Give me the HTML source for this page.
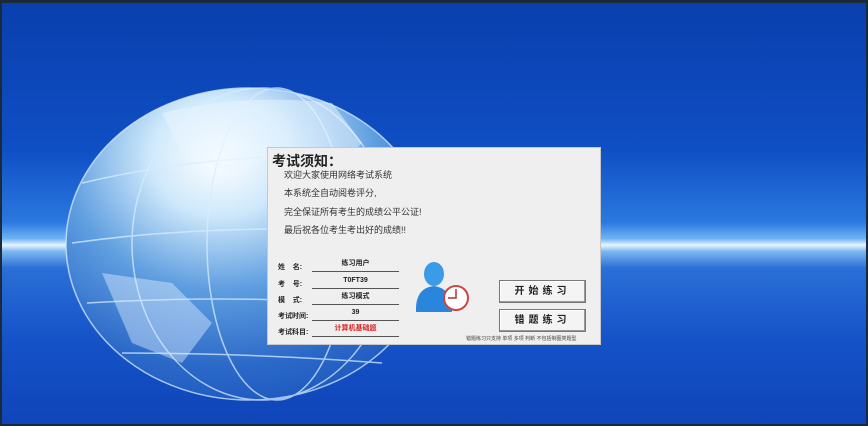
<!DOCTYPE html>
<html><head><meta charset="utf-8"><style>
*{margin:0;padding:0;box-sizing:border-box}
body{width:868px;height:426px;overflow:hidden;background:#1a2a3a;font-family:"Liberation Sans","Noto Sans CJK SC",sans-serif;position:relative}
#bg{position:absolute;left:2px;top:3px;width:864px;height:421px;overflow:hidden;
background:linear-gradient(180deg,#0a3fae 0%,#0f4fc4 35%,#2a78e0 52%,#6fb4f4 56%,#e8f6ff 57.5%,#7cb8f0 59%,#2a6fd6 63%,#1552c8 80%,#0f45b8 100%)}
.dlg{position:absolute;left:267px;top:147px;width:334px;height:198px;background:#efefef;border:1px solid #c8c8c8}
.t{position:absolute;font-size:12px;color:#333}
.lbl{position:absolute;left:10px;font-size:7px;font-weight:bold;color:#222}
.val{position:absolute;left:44px;width:87px;text-align:center;font-size:7px;font-weight:bold;color:#222;border-bottom:1px solid #555;height:14px;line-height:12px}
.btn{position:absolute;left:231px;width:87px;height:23px;border:1px solid #777;background:#f4f4f4;box-shadow:inset -1px -1px #999,inset 1px 1px #fff;font-size:10px;font-weight:bold;text-align:center;line-height:21px;letter-spacing:4px;color:#222}
</style></head><body>
<div id="bg">
<svg width="864" height="421" style="position:absolute;left:0;top:0">
<defs>
<radialGradient id="g" cx="0.42" cy="0.22" r="0.85">
<stop offset="0" stop-color="#ffffff"/><stop offset="0.22" stop-color="#cfe9fb"/><stop offset="0.5" stop-color="#5f9ee0"/><stop offset="0.8" stop-color="#2a68c8"/><stop offset="1" stop-color="#1a55bc"/>
</radialGradient>
</defs>
<ellipse cx="247" cy="241" rx="183" ry="156" fill="url(#g)"/>
<g fill="none" stroke="#d8ecff" stroke-width="1.5" opacity="0.75">
<ellipse cx="247" cy="241" rx="183" ry="156"/>
<ellipse cx="260" cy="241" rx="130" ry="156"/>
<ellipse cx="275" cy="241" rx="70" ry="156"/>
<path d="M80 180 Q250 140 420 160 M70 240 Q250 215 430 235 M85 300 Q250 290 420 305 M120 350 Q250 350 380 360"/>
</g>
<path d="M160 110 Q240 90 330 100 L360 140 L330 170 L280 150 L230 170 L180 150 Z" fill="#eaf6ff" opacity="0.5"/>
<path d="M100 270 L170 280 L210 320 L180 360 L130 340 Z" fill="#dbeeff" opacity="0.45"/>
</svg>
</div>
<div class="dlg">
<div class="t" style="left:4px;top:3px;font-size:14px;font-weight:bold;color:#222">考试须知：</div>
<div class="t" style="left:16px;top:20px;font-size:9px">欢迎大家使用网络考试系统</div>
<div class="t" style="left:16px;top:38px;font-size:9px">本系统全自动阅卷评分,</div>
<div class="t" style="left:16px;top:57px;font-size:9px">完全保证所有考生的成绩公平公证!</div>
<div class="t" style="left:16px;top:75px;font-size:9px">最后祝各位考生考出好的成绩!!</div>
<div class="lbl" style="top:114px">姓&nbsp;&nbsp;&nbsp;&nbsp;名:</div>
<div class="lbl" style="top:131px">考&nbsp;&nbsp;&nbsp;&nbsp;号:</div>
<div class="lbl" style="top:147px">模&nbsp;&nbsp;&nbsp;&nbsp;式:</div>
<div class="lbl" style="top:163px">考试时间:</div>
<div class="lbl" style="top:179px">考试科目:</div>
<div class="val" style="top:110px">练习用户</div>
<div class="val" style="top:127px">T0FT39</div>
<div class="val" style="top:143px">练习模式</div>
<div class="val" style="top:159px">39</div>
<div class="val" style="top:175px;color:#e02020">计算机基础题</div>
<svg width="64" height="64" style="position:absolute;left:146px;top:110px">
<ellipse cx="20" cy="16" rx="10" ry="12" fill="#3a9be6"/>
<path d="M2 54 Q1 30 20 28 Q38 30 38 54 Z" fill="#2a86dc"/>
<circle cx="42" cy="40" r="12" fill="#fff" stroke="#c84848" stroke-width="2"/>
<path d="M42 31 V40 H34" stroke="#a33" stroke-width="1.5" fill="none"/>
</svg>
<div class="btn" style="top:132px">开始练习</div>
<div class="btn" style="top:161px">错题练习</div>
<div class="t" style="left:198px;top:187px;font-size:5px;color:#444">错题练习只支持 单项 多项 判断 不包括制图类题型</div>
</div>
</body></html>
